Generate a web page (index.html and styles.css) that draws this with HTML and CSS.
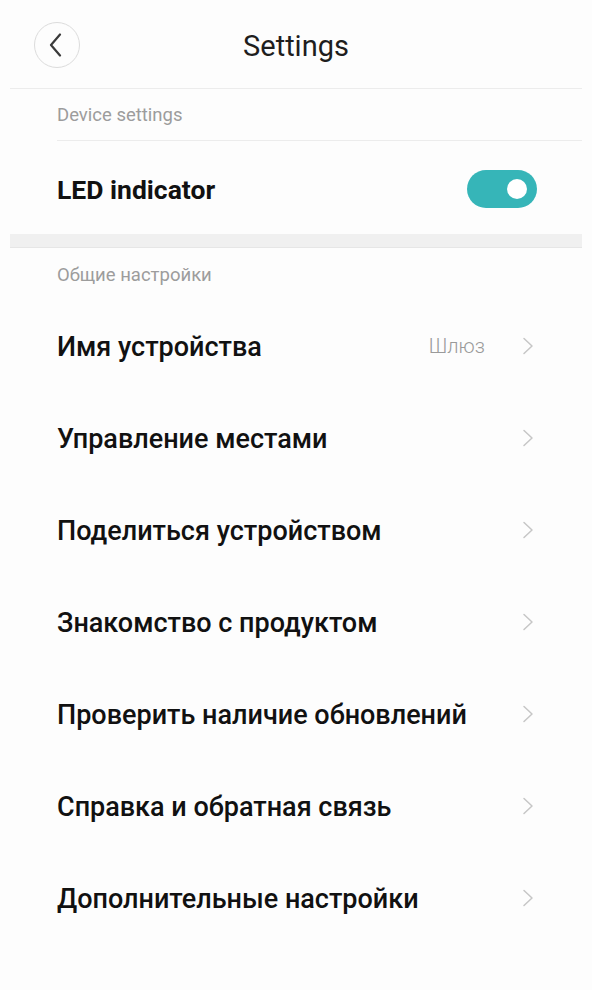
FILE: index.html
```html
<!DOCTYPE html>
<html lang="ru">
<head>
<meta charset="utf-8">
<title>Settings</title>
<link rel="stylesheet" href="styles.css">
</head>
<body>
<div class="page">
  <header class="topbar">
    <button class="back" aria-label="Back">
      <svg width="16" height="24" viewBox="0 0 16 24"><path d="M12 1.5 L3 12 L12 22.5" fill="none" stroke="#3a3a3a" stroke-width="2.2" stroke-linecap="round" stroke-linejoin="round"/></svg>
    </button>
    <h1 class="title">Settings</h1>
  </header>

  <div class="section-label first">Device settings</div>
  <div class="row toggle-row">
    <span class="row-text">LED indicator</span>
    <span class="switch"><span class="knob"></span></span>
  </div>

  <div class="band"></div>

  <div class="section-label">Общие настройки</div>
  <div class="row">
    <span class="row-text">Имя устройства</span>
    <span class="row-end"><span class="value">Шлюз</span><svg class="chev" width="12" height="18" viewBox="0 0 12 18"><path d="M2 1.5 L10 9 L2 16.5" fill="none" stroke="#c6c6c6" stroke-width="1.5" stroke-linecap="round" stroke-linejoin="round"/></svg></span>
  </div>
  <div class="row">
    <span class="row-text">Управление местами</span>
    <span class="row-end"><svg class="chev" width="12" height="18" viewBox="0 0 12 18"><path d="M2 1.5 L10 9 L2 16.5" fill="none" stroke="#c6c6c6" stroke-width="1.5" stroke-linecap="round" stroke-linejoin="round"/></svg></span>
  </div>
  <div class="row">
    <span class="row-text">Поделиться устройством</span>
    <span class="row-end"><svg class="chev" width="12" height="18" viewBox="0 0 12 18"><path d="M2 1.5 L10 9 L2 16.5" fill="none" stroke="#c6c6c6" stroke-width="1.5" stroke-linecap="round" stroke-linejoin="round"/></svg></span>
  </div>
  <div class="row">
    <span class="row-text">Знакомство с продуктом</span>
    <span class="row-end"><svg class="chev" width="12" height="18" viewBox="0 0 12 18"><path d="M2 1.5 L10 9 L2 16.5" fill="none" stroke="#c6c6c6" stroke-width="1.5" stroke-linecap="round" stroke-linejoin="round"/></svg></span>
  </div>
  <div class="row">
    <span class="row-text">Проверить наличие обновлений</span>
    <span class="row-end"><svg class="chev" width="12" height="18" viewBox="0 0 12 18"><path d="M2 1.5 L10 9 L2 16.5" fill="none" stroke="#c6c6c6" stroke-width="1.5" stroke-linecap="round" stroke-linejoin="round"/></svg></span>
  </div>
  <div class="row">
    <span class="row-text">Справка и обратная связь</span>
    <span class="row-end"><svg class="chev" width="12" height="18" viewBox="0 0 12 18"><path d="M2 1.5 L10 9 L2 16.5" fill="none" stroke="#c6c6c6" stroke-width="1.5" stroke-linecap="round" stroke-linejoin="round"/></svg></span>
  </div>
  <div class="row">
    <span class="row-text">Дополнительные настройки</span>
    <span class="row-end"><svg class="chev" width="12" height="18" viewBox="0 0 12 18"><path d="M2 1.5 L10 9 L2 16.5" fill="none" stroke="#c6c6c6" stroke-width="1.5" stroke-linecap="round" stroke-linejoin="round"/></svg></span>
  </div>
</div>
</body>
</html>
```

FILE: styles.css
```css
html, body {
  margin: 0;
  padding: 0;
  background: #fdfdfd;
}
body {
  font-family: Roboto, "Noto Sans", "Liberation Sans", sans-serif;
  color: #111;
}
.page {
  margin: 0 10px;
  min-height: 990px;
}
.topbar {
  height: 89px;
  border-bottom: 1px solid #ececec;
  display: flex;
  align-items: center;
  position: relative;
  padding-left: 24px;
  box-sizing: border-box;
}
.back {
  width: 46px;
  height: 46px;
  border-radius: 50%;
  border: 1.5px solid #dcdcdc;
  background: #fdfdfd;
  display: flex;
  align-items: center;
  justify-content: center;
  padding: 0;
  margin-top: 2px;
}
.back svg {
  margin-left: -2px;
  display: block;
}
.title {
  position: absolute;
  left: 0;
  right: 0;
  top: 0;
  margin: 0;
  text-align: center;
  line-height: 92px;
  font-size: 29px;
  font-weight: 400;
  color: #1e1e1e;
  pointer-events: none;
}
.section-label {
  margin-left: 47px;
  height: 52px;
  display: flex;
  align-items: center;
  font-size: 18.5px;
  color: #9c9c9c;
  padding-top: 1px;
  box-sizing: border-box;
}
.section-label.first {
  height: 52px;
  border-bottom: 1px solid #ececec;
}
.row {
  height: 92px;
  display: flex;
  align-items: center;
  justify-content: space-between;
  padding: 0 48px 0 47px;
}
.toggle-row {
  height: 93px;
  padding-right: 45px;
}
.row-text {
  font-size: 27px;
  font-weight: 500;
  color: #111;
  padding-top: 1px;
}
.toggle-row .row-text {
  font-weight: 700;
  font-size: 26.5px;
  padding-top: 4px;
}
.switch {
  width: 70px;
  height: 38px;
  border-radius: 19px;
  background: #36b5b8;
  display: flex;
  align-items: center;
  justify-content: flex-end;
  padding-right: 10px;
  box-sizing: border-box;
  margin-top: 2px;
}
.knob {
  width: 20px;
  height: 20px;
  border-radius: 50%;
  background: #fff;
}
.band {
  height: 13px;
  background: #f0f0f0;
  border-bottom: 1px solid #e6e6e6;
}
.row-end {
  display: flex;
  align-items: center;
  gap: 37px;
}
.value {
  font-size: 20px;
  font-weight: 300;
  color: #9a9a9a;
}
.chev {
  display: block;
}
```
